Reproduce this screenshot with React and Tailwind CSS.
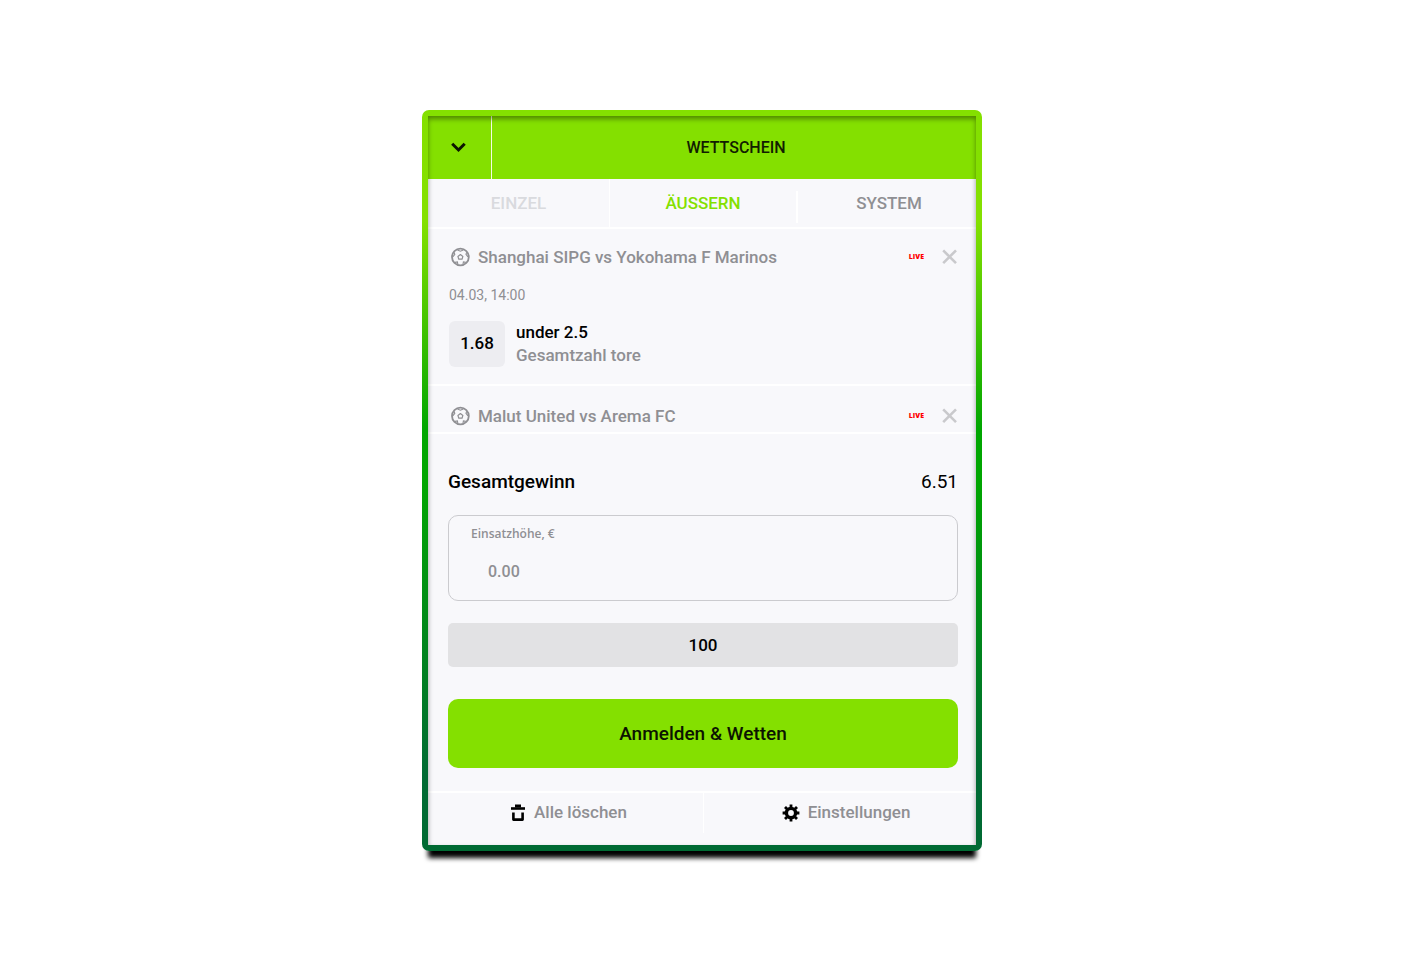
import React, { useState } from "react";

const bets = [
  {
    id: 1,
    match: "Shanghai SIPG vs Yokohama F Marinos",
    date: "04.03, 14:00",
    odds: "1.68",
    pick: "under 2.5",
    market: "Gesamtzahl tore",
  },
  { id: 2, match: "Malut United vs Arema FC" },
];

function ChevronIcon() {
  return (
    <svg className="h-4 w-4" viewBox="0 0 16 16" fill="none" stroke="#0c1400" strokeWidth="3">
      <path d="M2.2 3.8 8.5 10l6.2-6.2" />
    </svg>
  );
}

function BallIcon() {
  return (
    <svg className="h-5 w-5 shrink-0" viewBox="0 0 20 20" fill="none" stroke="#8f8f93">
      <circle cx="10.4" cy="10" r="8.4" strokeWidth="1.8" />
      <path d="m10.4 7.6 2.5 1.8-.9 2.8H8.8l-.9-2.8z" strokeWidth="1.2" strokeLinejoin="round" />
      <path
        d="M7.4 3l3 1.2 3-1.2M2.8 9.8l2-2.4-.6-2M18 9.8l-2-2.4.6-2M5 15.4l2.4-.4.4 2.2M15.8 15.4l-2.4-.4-.4 2.2"
        strokeWidth="1.1"
      />
    </svg>
  );
}

function CloseIcon() {
  return (
    <svg className="h-4 w-4" viewBox="0 0 16 16" fill="none" stroke="#c9c9cc" strokeWidth="2.6">
      <path d="m1.2 1.4 12.8 12.8M14 1.4 1.2 14.2" />
    </svg>
  );
}

function TrashIcon() {
  return (
    <svg className="h-[18px] w-4" viewBox="0 0 16 18" fill="none" stroke="#000">
      <path d="M1 4.5h14" strokeWidth="2.6" />
      <path d="M5 2h6" strokeWidth="3" />
      <path d="M3.4 8.6v7h9.2v-7" strokeWidth="2.6" strokeLinejoin="round" />
    </svg>
  );
}

function GearIcon() {
  return (
    <svg className="h-[18px] w-[18px]" viewBox="0 0 18 18" fill="none" stroke="#000">
      <circle cx="9" cy="9" r="4.6" strokeWidth="3.4" />
      <path
        d="M9 .6v3M9 14.4v3M.6 9h3M14.4 9h3M3 3l2 2M13 13l2 2M3 15l2-2M13 5l2-2"
        strokeWidth="2.8"
      />
    </svg>
  );
}

function BetItem({ bet, onRemove }) {
  return (
    <li className="border-b-2 border-white pr-[18px] pl-[21px]">
      <div className="flex h-5 items-center">
        <div className="flex flex-1 items-center gap-2 pl-px">
          <BallIcon />
          <h2 className="text-[17px] leading-5 font-medium text-[#8f8f93]">{bet.match}</h2>
        </div>
        <span className="mr-[18px] font-['Open_Sans',sans-serif] text-[7px] font-extrabold text-[#ff0000]">
          LIVE
        </span>
        <button type="button" aria-label="Wette entfernen" onClick={onRemove}>
          <CloseIcon />
        </button>
      </div>
      {bet.odds ? (
        <>
          <p className="mt-[18px] text-sm leading-5 text-[#8f8f93]">{bet.date}</p>
          <div className="mt-4 flex gap-[11px] pb-[17px]">
            <div className="flex h-[46px] w-14 items-center justify-center rounded-md bg-[#ededf1] text-[17px] font-medium">
              {bet.odds}
            </div>
            <div className="text-[17px] leading-[23px] font-medium">
              <p>{bet.pick}</p>
              <p className="text-[#8f8f93]">{bet.market}</p>
            </div>
          </div>
        </>
      ) : (
        <div className="h-[6px]" />
      )}
    </li>
  );
}

export default function App() {
  const [items, setItems] = useState(bets);
  const [stake, setStake] = useState("");

  return (
    <main className="flex min-h-screen items-center justify-center bg-white p-4 font-[Roboto,sans-serif] text-black">
      <section className="relative w-full max-w-[560px] rounded-[7px] bg-[linear-gradient(#84e000_0%,#84e000_15%,#00a600_43%,#00a600_50%,#006a33_90%)] p-1.5 shadow-[0_13px_5px_-6px_#000]">
        <div className="bg-[#f8f8fb]">
          <header className="flex h-[63px] bg-[#84e000]">
            <button
              type="button"
              aria-label="Wettschein schließen"
              className="flex w-16 items-center justify-center border-r border-[#f4fce4] pr-[3px]"
            >
              <ChevronIcon />
            </button>
            <h1 className="flex flex-1 items-center justify-center pl-1 text-base font-medium text-[#121d00]">
              WETTSCHEIN
            </h1>
          </header>

          <nav className="grid grid-cols-[182fr_186fr_180fr] border-b-2 border-white text-[17px] font-medium">
            <button type="button" disabled className="h-12 border-r border-white pt-px text-[#d9dade]">
              EINZEL
            </button>
            <button type="button" className="h-12 pt-px text-[#84e000]">
              ÄUSSERN
            </button>
            <button type="button" className="mt-3 h-8 border-l-2 border-white pb-[7px] pl-1 text-[#8f8f93]">
              SYSTEM
            </button>
          </nav>

          <ul className="flex flex-col gap-5 pt-[18px]">
            {items.map((bet) => (
              <BetItem
                key={bet.id}
                bet={bet}
                onRemove={() => setItems(items.filter((i) => i.id !== bet.id))}
              />
            ))}
          </ul>

          <div className="pt-[34px] pr-[18px] pb-[23px] pl-5">
            <div className="flex justify-between text-[19px] leading-7">
              <p className="font-medium">Gesamtgewinn</p>
              <p>6.51</p>
            </div>

            <div className="mt-[19px] h-[86px] rounded-[10px] border border-[#cbcbcf] px-[22px] pt-2">
              <label
                htmlFor="stake"
                className="block font-['Open_Sans',sans-serif] text-xs leading-5 font-semibold text-[#8f8f93]"
              >
                Einsatzhöhe, €
              </label>
              <input
                id="stake"
                value={stake}
                onChange={(e) => setStake(e.target.value)}
                placeholder="0.00"
                className="mt-4 block w-full pl-[17px] text-base font-medium outline-none placeholder:text-[#8f8f93]"
              />
            </div>

            <button
              type="button"
              onClick={() => setStake("100")}
              className="mt-[22px] block h-11 w-full rounded-[5px] bg-[#e2e2e4] pt-px text-[17px] font-medium"
            >
              100
            </button>
            <button
              type="button"
              className="mt-8 block h-[69px] w-full rounded-[10px] bg-[#84e000] pt-px text-[19px] font-medium text-[#0c1400]"
            >
              Anmelden &amp; Wetten
            </button>
          </div>

          <footer className="grid grid-cols-[276fr_272fr] border-t-2 border-white pb-3 text-[17px] font-medium text-[#8f8f93]">
            <button
              type="button"
              onClick={() => setItems([])}
              className="flex h-10 items-center justify-center gap-2 border-r border-white pl-1.5"
            >
              <TrashIcon />
              Alle löschen
            </button>
            <button type="button" className="flex h-10 items-center justify-center gap-2 pl-3">
              <GearIcon />
              Einstellungen
            </button>
          </footer>
        </div>

        {/* inner shadow over the whole slip, open at the bottom edge */}
        <div className="pointer-events-none absolute inset-1.5 shadow-[inset_0_3px_5px_rgba(0,0,0,0.4)]" />
      </section>
    </main>
  );
}
